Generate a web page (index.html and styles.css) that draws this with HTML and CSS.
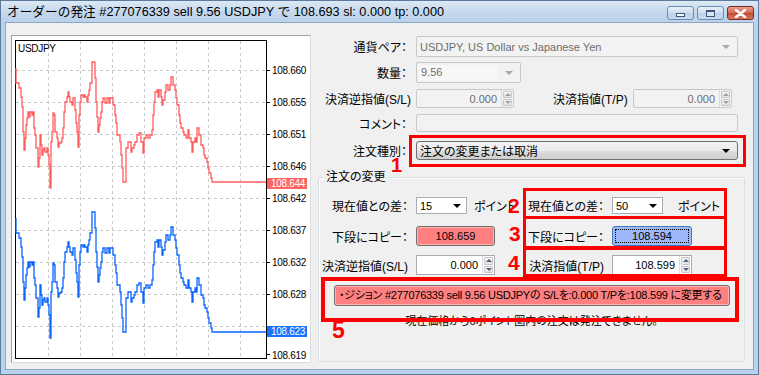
FILE: index.html
```html
<!DOCTYPE html>
<html lang="ja">
<head>
    <meta charset="UTF-8">
    <title>オーダーの発注</title>
    <link rel="stylesheet" href="styles.css">
</head>
<body>
<div class="window">
    <div class="titlebar">
        <span class="title">オーダーの発注 #277076339 sell 9.56 USDJPY で 108.693 sl: 0.000 tp: 0.000</span>
        <div class="caption-buttons">
            <span class="cbtn min"><i></i></span>
            <span class="cbtn max"><i></i></span>
            <span class="cbtn close">
                <svg width="13" height="9" viewBox="0 0 13 9"><path d="M2 1L11 8M11 1L2 8" stroke="#fff" stroke-width="2.4" stroke-linecap="round"/></svg>
            </span>
        </div>
    </div>

    <div class="client">
        <!-- tick chart -->
        <div class="chart-panel">
            <svg class="chart" width="298" height="326" viewBox="12 36 298 326">
                <defs>
                    <path id="tick" d="M16 68V83H19V88H21V97H22V107H23V132H24V150H25V138H26V125H27V118H28V112H29V117H30V112H32V115H33V112H34V128H35V135H36V148H38V167H39V158H40V135H41V145H42V155H43V150H44V148H45V152H47V148H48V155H49V165H50V188H51V142H52V132H53V113H54V115H55V132H57V138H58V147H59V143H61V142H62V138H63V128H64V112H65V102H67V97H68V92H69V97H70V102H72V105H73V98H75V110H76V123H77V132H78V147H79V115H80V102H81V95H83V97H84V95H85V97H87V102H88V95H89V90H90V83H92V62H94V62H95V78H96V102H97V117H98V132H99V125H100V118H101V112H102V102H103V98H105V103H107V98H109V103H110V98H112V98H113V105H115V115H116V123H117V135H120V142H121V155H122V168H123V182H126V148H128V142H131V152H132V148H134V145H135V142H137V135H139V133H141V142H143V153H144V138H146V135H148V138H150V135H152V130H153V115H154V102H155V92H157V90H158V97H159V90H161V97H162V105H163V100H165V92H166V85H168V90H170V85H171V77H173V85H175V90H176V98H177V105H179V115H180V123H181V128H183V132H184V135H186V138H188V130H189V138H191V142H192V152H193V142H195V138H196V142H197V128H199V135H201V145H203V148H204V155H205V158H207V162H208V168H209V173H211V178H212V182H266"/>
                </defs>
                <rect x="12" y="36" width="298" height="326" fill="#fff"/>
                <g stroke="#c8c8c8" stroke-dasharray="3 3" fill="none">
                    <path d="M16 70.5H266M16 102.5H266M16 134.5H266M16 166.5H266M16 198.5H266M16 230.5H266M16 262.5H266M16 294.5H266M16 326.5H266"/>
                    <path d="M48.5 41V358M80.5 41V358M112.5 41V358M144.5 41V358M176.5 41V358M208.5 41V358M240.5 41V358"/>
                </g>
                <rect x="15.5" y="40.5" width="251" height="318" fill="none" stroke="#000"/>
                <path d="M266 70.5h4M266 102.5h4M266 134.5h4M266 166.5h4M266 198.5h4M266 230.5h4M266 262.5h4M266 294.5h4M266 354.5h4" stroke="#000"/>
                <g fill="none" stroke-width="1.3">
                    <use href="#tick" stroke="#ff5c5c"/>
                    <use href="#tick" y="150" stroke="#0a64ff"/>
                </g>
                <g class="axis">
                    <text x="18" y="52">USDJPY</text>
                    <text x="272" y="74">108.660</text>
                    <text x="272" y="106">108.655</text>
                    <text x="272" y="138">108.651</text>
                    <text x="272" y="170">108.646</text>
                    <text x="272" y="202">108.642</text>
                    <text x="272" y="234">108.637</text>
                    <text x="272" y="266">108.632</text>
                    <text x="272" y="298">108.628</text>
                    <text x="272" y="359">108.619</text>
                </g>
                <rect x="267" y="178" width="40" height="11" fill="#ff6464"/>
                <text class="axis-tag" x="271" y="187">108.644</text>
                <rect x="267" y="326" width="40" height="11" fill="#1a73ff"/>
                <text class="axis-tag" x="271" y="335">108.623</text>
            </svg>
        </div>

        <div class="form">
            <div class="row h21">
                <span class="lbl">通貨ペア：</span>
                <div class="combo off w322"><span class="val">USDJPY, US Dollar vs Japanese Yen</span><i class="arr"></i></div>
            </div>
            <div class="row h21 gap5">
                <span class="lbl">数量：</span>
                <div class="combo off w105"><span class="val inner">9.56</span><i class="arr"></i></div>
            </div>
            <div class="row h19 gap6">
                <span class="lbl left">決済逆指値(S/L)</span>
                <div class="spinbox off w98"><span class="val">0.000</span><span class="spin"><i class="up"></i><i class="dn"></i></span></div>
                <span class="lbl2">決済指値(T/P)</span>
                <div class="spinbox off w99"><span class="val">0.000</span><span class="spin"><i class="up"></i><i class="dn"></i></span></div>
            </div>
            <div class="row h18 gap6">
                <span class="lbl">コメント：</span>
                <div class="textbox off w322"></div>
            </div>
            <div class="row h19 gap9">
                <span class="lbl">注文種別：</span>
                <div class="combo btnlike w322"><span class="val jp">注文の変更または取消</span><i class="arr dark"></i></div>
            </div>

            <div class="group">
                <span class="legend">注文の変更</span>

                <div class="grow f">
                    <span class="glbl">現在値との差：</span>
                    <div class="cell"><div class="combo on w51"><span class="val">15</span><i class="arr dark"></i></div><span class="pt">ポイント</span></div>
                    <span class="glbl">現在値との差：</span>
                    <div class="cell"><div class="combo on w51"><span class="val">50</span><i class="arr dark"></i></div><span class="pt wide">ポイント</span></div>
                </div>

                <div class="grow g">
                    <span class="glbl">下段にコピー：</span>
                    <div class="cell"><span class="copy red">108.659</span></div>
                    <span class="glbl">下段にコピー：</span>
                    <div class="cell"><span class="copy blue"><b>108.594</b></span></div>
                </div>

                <div class="grow h">
                    <span class="glbl">決済逆指値(S/L)</span>
                    <div class="cell"><div class="spinbox on w79"><span class="val">0.000</span><span class="spin"><i class="up"></i><i class="dn"></i></span></div></div>
                    <span class="glbl">決済指値(T/P)</span>
                    <div class="cell"><div class="spinbox on w80"><span class="val">108.599</span><span class="spin"><i class="up"></i><i class="dn"></i></span></div></div>
                </div>

                <div class="modify">・ジション #277076339 sell 9.56 USDJPYの S/Lを:0.000 T/Pを:108.599 に変更する</div>

                <p class="note">現在価格から6ポイント圏内の注文は発注できません。</p>
            </div>
        </div>
    </div>

    <!-- red annotation marks -->
    <div class="mark m1"></div>
    <div class="mark m2"></div>
    <div class="mark m3"></div>
    <div class="mark m4"></div>
    <div class="mark m5"></div>
    <span class="num n1">1</span>
    <span class="num n2">2</span>
    <span class="num n3">3</span>
    <span class="num n4">4</span>
    <span class="num n5">5</span>
</div>
</body>
</html>
```

FILE: styles.css
```css
* {
    box-sizing: border-box;
}

body {
    margin: 0;
    font-family: "Liberation Sans", "Noto Sans CJK JP", sans-serif;
    font-size: 12px;
    font-feature-settings: "palt";
    color: #000;
}

.window {
    position: relative;
    width: 759px;
    height: 375px;
    border: 1px solid #5b7a9c;
    background: linear-gradient(#dce8f5, #c3d7ed 12px, #b9d1ea 22px, #b9d1ea);
    padding: 0 4px 4px;
    display: flex;
    flex-direction: column;
}

.titlebar {
    height: 21px;
    display: flex;
    justify-content: space-between;
    flex-shrink: 0;
}

.title {
    padding: 3px 0 0 2px;
    font-size: 12.7px;
    line-height: 16px;
    font-feature-settings: normal;
    white-space: nowrap;
}

.caption-buttons {
    display: flex;
    gap: 3px;
    margin: 5px 0 0 0;
    height: 14px;
}

.cbtn {
    width: 27px;
    height: 14px;
    border: 1px solid #6f8cae;
    border-radius: 3px;
    background: linear-gradient(#e8f0f9, #cddcee 50%, #bcd0e8 51%, #c9dbef);
    display: flex;
    align-items: center;
    justify-content: center;
}

.cbtn.min i {
    width: 9px;
    height: 4px;
    margin-top: 4px;
    border: 1px solid #3e5677;
    background: #fff;
}

.cbtn.max i {
    width: 9px;
    height: 7px;
    border: 1px solid #3e5677;
    border-top-width: 2px;
    background: #dbe6f3;
}

.cbtn.close {
    border-color: #7b2c1e;
    background: linear-gradient(#e9a08e, #d2664f 50%, #c14a33 51%, #d77a5f);
}

.client {
    flex: 1;
    display: flex;
    border: 1px solid #8da6c2;
    background: #f0f0f0;
}

/* chart */
.chart-panel {
    margin: 12px 0 0 5px;
    width: 300px;
    height: 328px;
    border: 1px solid #a0a0a0;
    border-right-color: #dcdcdc;
    border-bottom-color: #dcdcdc;
    flex-shrink: 0;
}

.chart {
    display: block;
}

.axis text,
.axis-tag {
    font-family: "Liberation Sans", sans-serif;
    font-size: 10px;
    letter-spacing: -0.3px;
}

.axis-tag {
    fill: #fff;
}

/* form */
.form {
    flex: 1;
    padding-top: 13px;
}

.row {
    display: flex;
    align-items: center;
}

.h21 { height: 21px; }
.h19 { height: 19px; }
.h18 { height: 18px; }
.gap5 { margin-top: 5px; }
.gap6 { margin-top: 6px; }
.gap9 { margin-top: 9px; }

.lbl {
    width: 96px;
    margin-right: 9px;
    text-align: right;
    white-space: nowrap;
}

.lbl.left {
    text-align: left;
    padding-left: 14px;
}

.lbl2 {
    width: 80px;
    margin-left: 39px;
    white-space: nowrap;
}

.w322 { width: 322px; }
.w105 { width: 105px; }
.w98 { width: 98px; }
.w99 { width: 99px; }
.w51 { width: 51px; }
.w79 { width: 79px; }
.w80 { width: 80px; }

.combo,
.spinbox,
.textbox {
    height: 100%;
    display: flex;
    align-items: center;
    border: 1px solid #abadb3;
    background: #fff;
}

.combo.off,
.spinbox.off,
.textbox.off {
    border-color: #c9c9c9;
    border-radius: 2px;
    background: #f2f2f2;
    color: #6d6d6d;
}

.val {
    font-size: 11px;
}

.val.jp {
    font-size: 12px;
}

.combo .val {
    flex: 1;
    padding-left: 3px;
    white-space: nowrap;
    overflow: hidden;
}

.combo .val.inner {
    align-self: stretch;
    margin: 2px 0 2px 2px;
    padding-left: 2px;
    line-height: 15px;
    background: #f7f7f7;
}

.arr {
    width: 0;
    height: 0;
    margin: 0 7px 0 7px;
    border-left: 4px solid transparent;
    border-right: 4px solid transparent;
    border-top: 4px solid #a8a8a8;
}

.arr.dark {
    border-top-color: #000;
}

.combo.btnlike {
    border-color: #707070;
    border-radius: 3px;
    background: linear-gradient(#f2f2f2, #ebebeb 50%, #dddddd 51%, #cfcfcf);
}

.combo.on {
    height: 17px;
}

.combo.on .arr {
    margin: 0 5px;
}

.spinbox .val {
    flex: 1;
    text-align: right;
    padding-right: 4px;
}

.spin {
    width: 12px;
    align-self: stretch;
    display: flex;
    flex-direction: column;
    gap: 1px;
    padding: 1px;
    border-left: 1px solid #dcdcdc;
}

.spin i {
    flex: 1;
    display: flex;
    align-items: center;
    justify-content: center;
    border: 1px solid #c6c6c6;
    border-radius: 1px;
    background: linear-gradient(#f6f6f6, #e4e4e4);
}

.spin i::after {
    content: "";
    border-left: 3px solid transparent;
    border-right: 3px solid transparent;
}

.spin .up::after { border-bottom: 3px solid #a0a0a0; }
.spin .dn::after { border-top: 3px solid #a0a0a0; }

.spinbox.on .spin .up::after { border-bottom-color: #4c6185; }
.spinbox.on .spin .dn::after { border-top-color: #4c6185; }

/* group */
.group {
    margin: 17px 0 0 7px;
    width: 427px;
    height: 185px;
    border: 1px solid #d5dfe5;
    border-radius: 3px;
    box-shadow: inset 1px 1px #fff;
}

.legend {
    display: block;
    width: max-content;
    margin: -8px 0 0 4px;
    padding: 0 3px;
    line-height: 14px;
    background: #f0f0f0;
}

.grow {
    display: grid;
    grid-template-columns: 97px 107px 89px 1fr;
    align-items: center;
}

.grow.f { height: 17px; margin-top: 13px; }
.grow.g { height: 19px; margin-top: 12px; }
.grow.h { height: 20px; margin-top: 10px; }

.glbl {
    padding-right: 8px;
    text-align: right;
    white-space: nowrap;
}

.cell {
    height: 100%;
    display: flex;
    align-items: center;
}

.pt {
    margin-left: 7px;
    white-space: nowrap;
}

.pt.wide {
    margin-left: 15px;
}

.copy {
    height: 100%;
    display: flex;
    align-items: center;
    justify-content: center;
    border-radius: 3px;
    font-size: 11px;
}

.copy.red {
    width: 79px;
    border: 1px solid #707070;
    box-shadow: inset 0 0 0 1px #ffb0b0;
    background: #ff8080;
}

.copy.blue {
    width: 80px;
    padding: 2px;
    border: 1px solid #3c7fb1;
    background: #9db7fb;
}

.copy.blue b {
    flex: 1;
    align-self: stretch;
    display: flex;
    align-items: center;
    justify-content: center;
    font-weight: normal;
    border: 1px dotted #000;
}

.modify {
    margin: 10px 0 0 15px;
    width: 396px;
    height: 21px;
    padding-left: 4px;
    font-size: 11px;
    letter-spacing: -0.25px;
    line-height: 19px;
    white-space: nowrap;
    overflow: hidden;
    border: 1px solid #707070;
    border-radius: 3px;
    box-shadow: inset 0 0 0 1px #ffb0b0;
    background: #ff8080;
}

.note {
    margin: 8px 0 0;
    text-align: center;
    font-size: 11px;
    line-height: 14px;
    white-space: nowrap;
}

/* red annotations */
.mark {
    position: absolute;
    border: 3px solid #ff0000;
}

.m1 { left: 408px; top: 134px; width: 337px; height: 32px; }
.m2 { left: 522px; top: 187px; width: 204px; height: 31px; }
.m3 { left: 522px; top: 215px; width: 204px; height: 34px; }
.m4 { left: 522px; top: 245px; width: 204px; height: 31px; }
.m5 { left: 320px; top: 276px; width: 418px; height: 45px; border-width: 4px; }

.num {
    position: absolute;
    color: #ff0000;
    font-family: "Liberation Sans", sans-serif;
    font-weight: bold;
    font-size: 21px;
    line-height: 21px;
}

.n1 { left: 390px; top: 154px; font-size: 20px; }
.n2 { left: 507px; top: 194px; }
.n3 { left: 508px; top: 222px; }
.n4 { left: 507px; top: 251px; }
.n5 { left: 331px; top: 319px; font-size: 23px; }
```
